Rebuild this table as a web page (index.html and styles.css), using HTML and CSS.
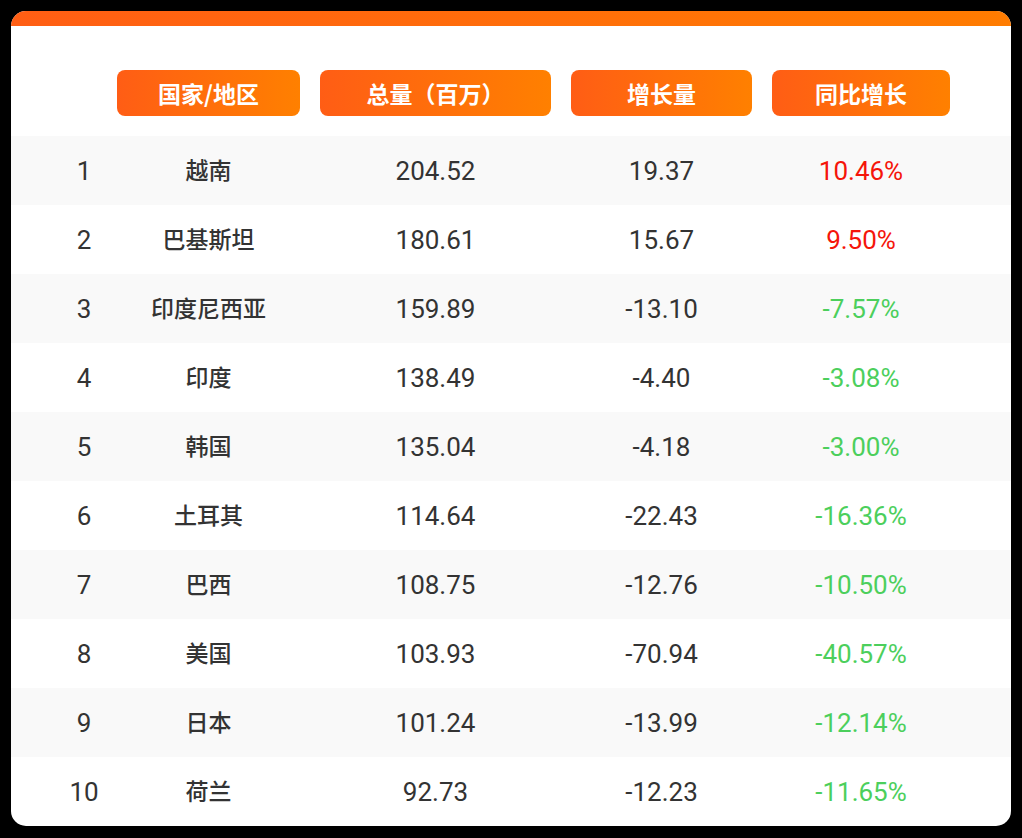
FILE: index.html
```html
<!DOCTYPE html>
<html lang="zh-CN">
<head>
<meta charset="utf-8">
<title>国家/地区 排名</title>
<link rel="stylesheet" href="styles.css">
</head>
<body>
<div class="card">
  <div class="topbar"></div>
  <div class="head row-grid">
    <div></div>
    <div class="cell"><div class="pill">国家/地区</div></div>
    <div class="cell"><div class="pill">总量（百万）</div></div>
    <div class="cell"><div class="pill">增长量</div></div>
    <div class="cell"><div class="pill">同比增长</div></div>
  </div>
  <div class="rows">
    <div class="row row-grid"><div class="num">1</div><div class="cn">越南</div><div class="num">204.52</div><div class="num">19.37</div><div class="num up">10.46%</div></div>
    <div class="row row-grid"><div class="num">2</div><div class="cn">巴基斯坦</div><div class="num">180.61</div><div class="num">15.67</div><div class="num up">9.50%</div></div>
    <div class="row row-grid"><div class="num">3</div><div class="cn">印度尼西亚</div><div class="num">159.89</div><div class="num">-13.10</div><div class="num down">-7.57%</div></div>
    <div class="row row-grid"><div class="num">4</div><div class="cn">印度</div><div class="num">138.49</div><div class="num">-4.40</div><div class="num down">-3.08%</div></div>
    <div class="row row-grid"><div class="num">5</div><div class="cn">韩国</div><div class="num">135.04</div><div class="num">-4.18</div><div class="num down">-3.00%</div></div>
    <div class="row row-grid"><div class="num">6</div><div class="cn">土耳其</div><div class="num">114.64</div><div class="num">-22.43</div><div class="num down">-16.36%</div></div>
    <div class="row row-grid"><div class="num">7</div><div class="cn">巴西</div><div class="num">108.75</div><div class="num">-12.76</div><div class="num down">-10.50%</div></div>
    <div class="row row-grid"><div class="num">8</div><div class="cn">美国</div><div class="num">103.93</div><div class="num">-70.94</div><div class="num down">-40.57%</div></div>
    <div class="row row-grid"><div class="num">9</div><div class="cn">日本</div><div class="num">101.24</div><div class="num">-13.99</div><div class="num down">-12.14%</div></div>
    <div class="row row-grid"><div class="num">10</div><div class="cn">荷兰</div><div class="num">92.73</div><div class="num">-12.23</div><div class="num down">-11.65%</div></div>
  </div>
</div>
</body>
</html>
```

FILE: styles.css
```css
html, body {
  margin: 0;
  padding: 0;
  background: #000;
}
body {
  font-family: Roboto, "Noto Sans CJK SC", sans-serif;
  color: #333;
}
.card {
  margin: 11px;
  width: 1000px;
  height: 815px;
  background: #fff;
  border-radius: 15px;
  overflow: hidden;
  display: flex;
  flex-direction: column;
}
.topbar {
  height: 15px;
  background: linear-gradient(90deg, #ff5e14, #ff7c00);
  flex: none;
}
.row-grid {
  display: grid;
  grid-template-columns: 46px 203px 251px 201px 198px;
  padding-left: 50px;
  align-items: center;
}
.head {
  padding-top: 44px;
  padding-bottom: 20px;
}
.cell {
  padding: 0 10px;
}
.pill {
  height: 46px;
  border-radius: 8px;
  background: linear-gradient(90deg, #ff5d15, #ff8000);
  color: #fff;
  font-family: "Noto Sans CJK SC", sans-serif;
  font-weight: 700;
  font-size: 23px;
  line-height: 1;
  display: flex;
  align-items: center;
  justify-content: center;
}
.row {
  height: 69px;
  text-align: center;
}
.row:nth-child(odd) {
  background: #f9f9f9;
}
.num {
  font-size: 26px;
  line-height: 1;
}
.cn {
  font-family: "Noto Sans CJK SC", sans-serif;
  font-size: 23px;
  font-weight: 500;
  line-height: 1;
  padding-bottom: 3px;
}
.up {
  color: #f5150a;
}
.down {
  color: #4ccf5c;
}
```
